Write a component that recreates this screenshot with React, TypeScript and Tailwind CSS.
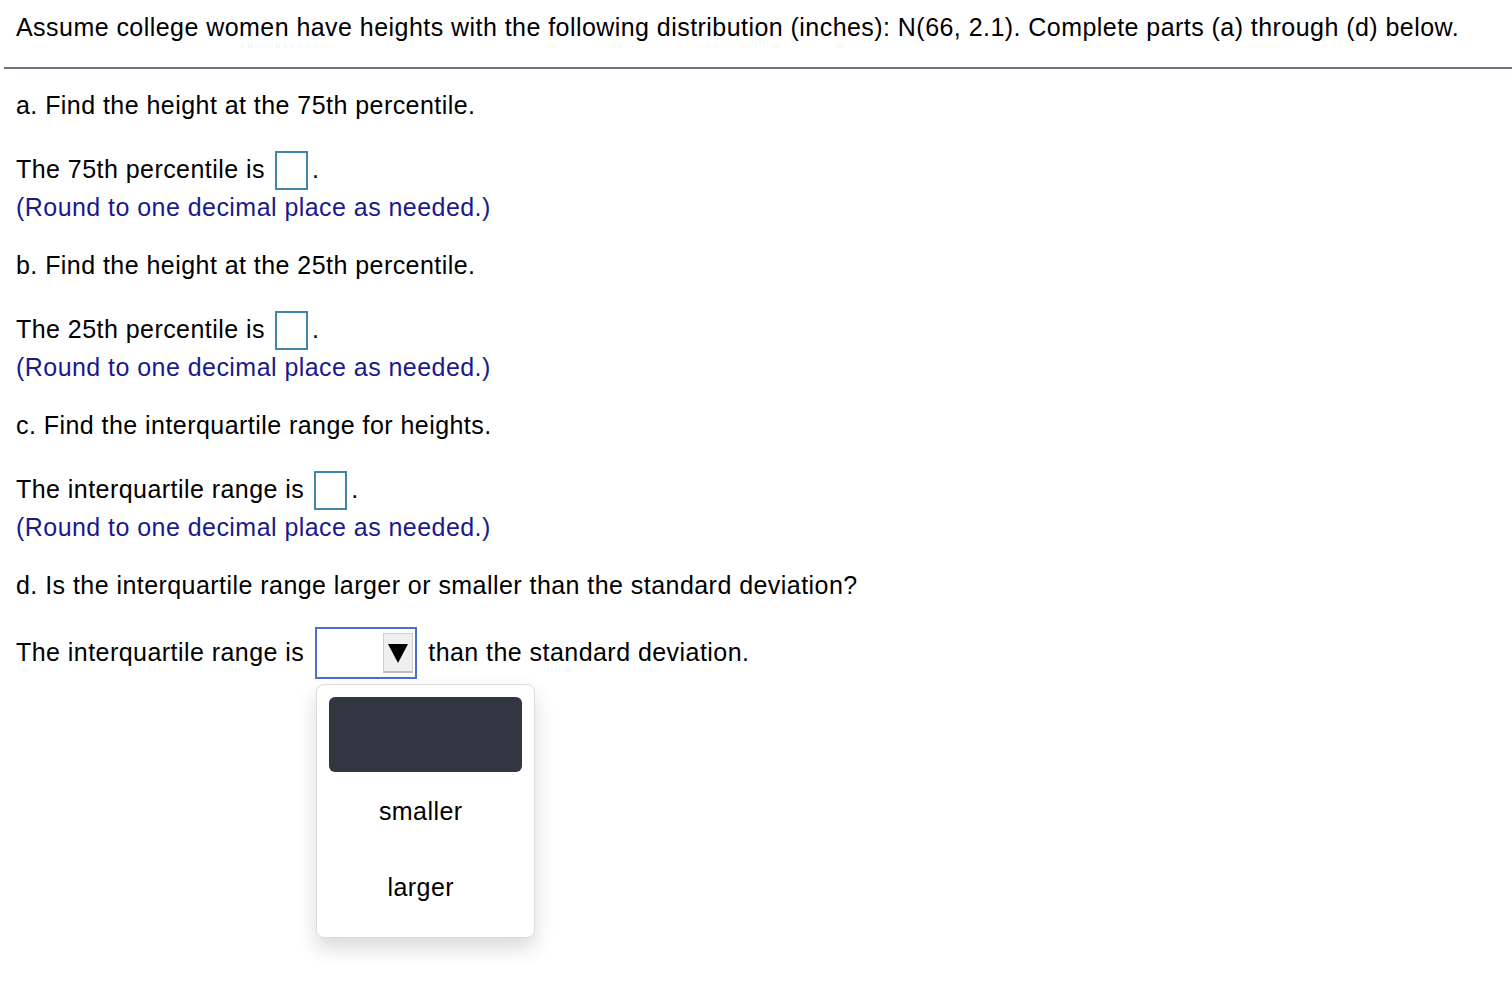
import React from 'react';

const font = { fontFamily: '"Liberation Sans", Arial, sans-serif' };

function AnswerBox() {
  return <span className="inline-block w-[33px] h-[39px] border-2 border-[#3f86a8] bg-white ml-[10px] mr-[4px]" />;
}

function Part({ label, answer }: { label: string; answer: string }) {
  return (
    <div className="mb-[20px]">
      <div className="h-[40px] flex items-center">{label}</div>
      <div className="h-[40px] mt-[24px] flex items-center">
        <span>{answer}</span>
        <AnswerBox />
        <span>.</span>
      </div>
      <div className="h-[36px] flex items-center text-[#1a1a8c]">(Round to one decimal place as needed.)</div>
    </div>
  );
}

export default function App() {
  return (
    <div className="w-[1512px] h-[998px] bg-white text-black text-[25px] tracking-[0.45px] overflow-hidden" style={font}>
      <div className="h-[56px] flex items-center px-4 whitespace-nowrap">
        Assume college women have heights with the following distribution (inches): N(66, 2.1). Complete parts (a) through (d) below.
      </div>
      <div className="ml-1 mt-[11px] h-[2px] bg-[#6b7480]" />
      <div className="px-4 pt-[17px]">
        <Part label="a. Find the height at the 75th percentile." answer="The 75th percentile is" />
        <Part label="b. Find the height at the 25th percentile." answer="The 25th percentile is" />
        <Part label="c. Find the interquartile range for heights." answer="The interquartile range is" />
        <div className="h-[40px] flex items-center">d. Is the interquartile range larger or smaller than the standard deviation?</div>
        <div className="flex items-center mt-[21px]">
          <span>The interquartile range is</span>
          <div className="relative ml-[11px]">
            <div className="w-[102px] h-[52px] border-2 border-[#4a6fcf] bg-white flex items-center justify-end pr-[2px]">
              <div className="w-[30px] h-[40px] bg-[#efefef] border border-[#cfcfcf] border-b-2 border-b-[#bdbdbd] flex items-center justify-center">
                <svg width="22" height="24" viewBox="0 0 22 24"><polygon points="1,3 21,3 11,22" fill="#000" /></svg>
              </div>
            </div>
            <div className="absolute left-[1px] top-[57px] w-[219px] h-[254px] bg-white border border-[#dcdcdc] rounded-[8px] shadow-[0_10px_20px_rgba(0,0,0,0.15)] p-[12px] flex flex-col items-center">
              <div className="w-full h-[75px] shrink-0 bg-[#323640] rounded-[6px]" />
              <div className="h-[80px] flex items-center pr-[10px]">smaller</div>
              <div className="h-[72px] flex items-center pr-[10px]">larger</div>
            </div>
          </div>
          <span className="ml-[11px]">than the standard deviation.</span>
        </div>
      </div>
    </div>
  );
}
